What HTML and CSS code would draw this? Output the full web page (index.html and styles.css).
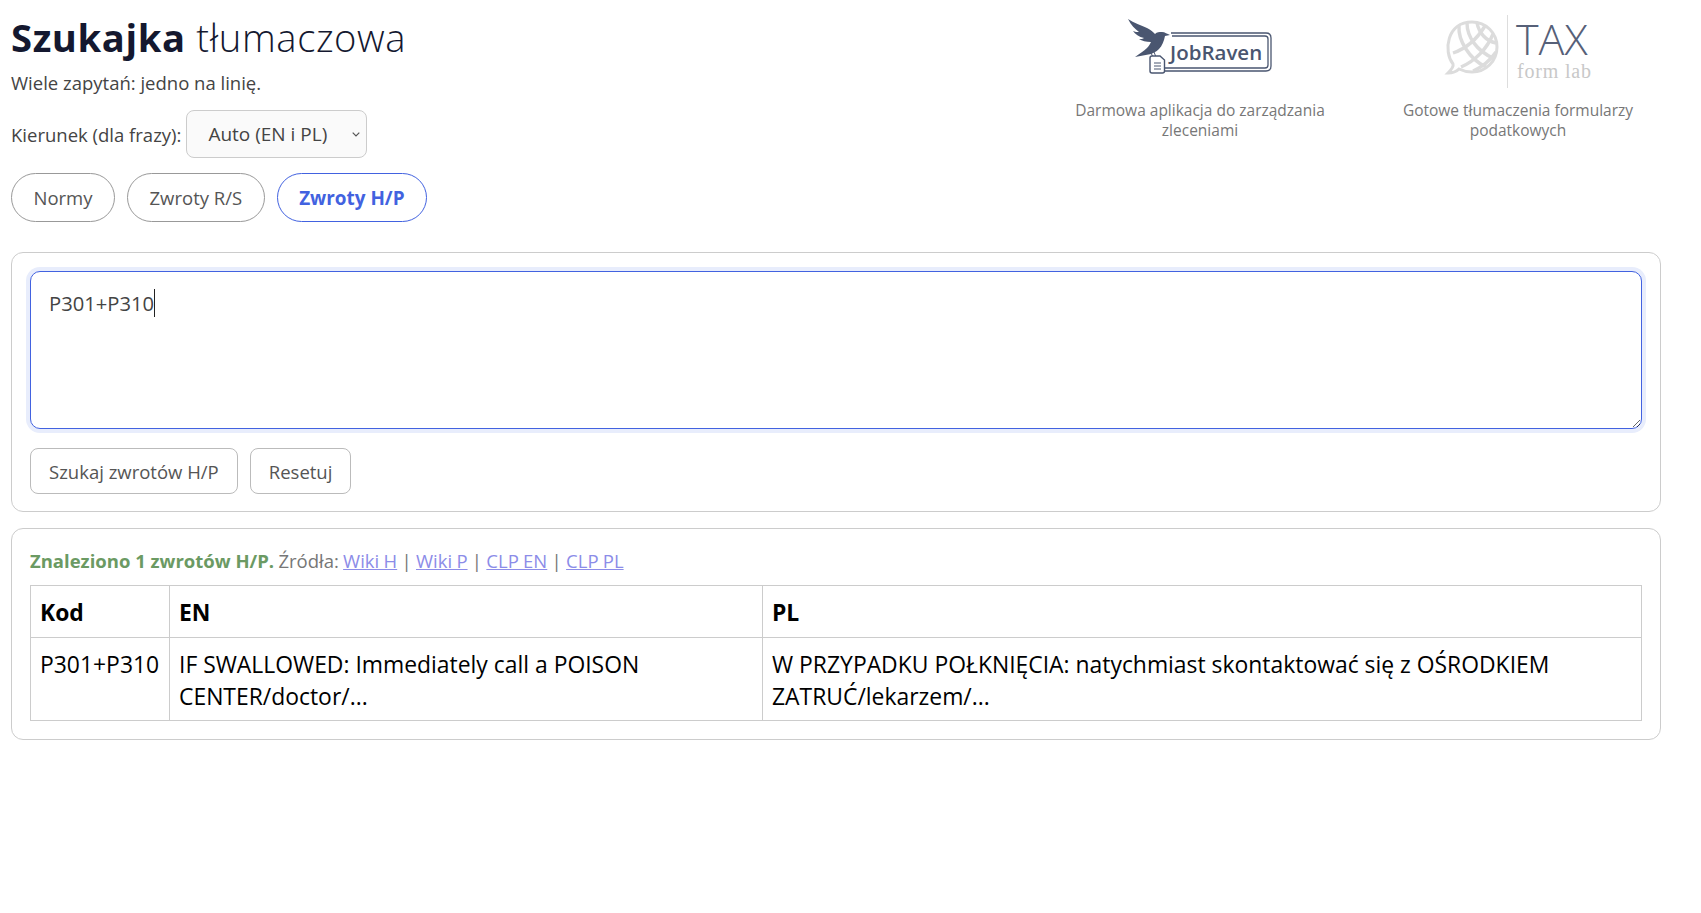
FILE: index.html
```html
<!DOCTYPE html>
<html lang="pl">
<head>
  <meta charset="UTF-8">
  <meta name="viewport" content="width=device-width, initial-scale=1.0">
  <title>Szukajka tłumaczowa</title>
  <link rel="stylesheet" href="styles.css">
</head>
<body>
  <div class="top">
    <div class="intro">
      <h1><strong>Szukajka</strong> tłumaczowa</h1>
      <p class="lead">Wiele zapytań: jedno na linię.</p>
      <div class="direction">
        <label for="dir">Kierunek (dla frazy):</label>
        <select id="dir">
          <option>Auto (EN i PL)</option>
        </select>
      </div>
      <div class="tabs">
        <button class="tab">Normy</button>
        <button class="tab">Zwroty R/S</button>
        <button class="tab active">Zwroty H/P</button>
      </div>
    </div>

    <div class="promos">
      <a class="promo">
        <svg class="logo" width="146" height="60" viewBox="0 0 146 60">
          <!-- ramka -->
          <path fill="none" stroke="#4a5670" stroke-width="1.3" d="M45 14H140Q145 14 145 19V47Q145 52 140 52H38"/>
          <path fill="none" stroke="#4a5670" stroke-width="1.3" d="M46 17H139Q142 17 142 20V46Q142 49 139 49H38"/>
          <!-- kruk -->
          <path fill="#4a5670" d="M2 0C8 4 15 6 21 9C25 11 27 13 29 15C31 13 33 13 36 13C39 13 41 15 44 16L39 17C38 22 36 27 33 30C30 33 27 34 25 35L9 38C13 35 18 32 21 29C23 27 24 25 25 23C20 23 16 22 13 20C15 20 17 20 18 19C13 18 9 15 7 12C9 13 11 13 13 13C9 10 5 6 2 0Z"/>
          <path fill="none" stroke="#4a5670" stroke-width="1" d="M28 33L30 38M25 34L27 38"/>
          <!-- dokument -->
          <path fill="#fff" stroke="#4a5670" stroke-width="1.4" d="M26 37H34L38.500 41V52Q38.500 54 36.500 54H26Q24 54 24 52V39Q24 37 26 37Z"/>
          <path fill="none" stroke="#4a5670" stroke-width="1" d="M28 44H35M28 47H35M28 50H35"/>
        </svg>
        <span class="logo-jr">JobRaven</span>
        <span class="promo-text">Darmowa aplikacja do zarządzania zleceniami</span>
      </a>
      <a class="promo">
        <svg class="logo logo-globe" width="70" height="70" viewBox="0 0 70 70">
          <!-- globus w dymku -->
          <path fill="#fff" stroke="#dcdcdc" stroke-width="3" d="M14 49C4 36 8 7 33 7C47 7 58 18 58 32C58 46 47 57 33 57C28 57 24 56 20 54C17 57 13 58 9 58C12 55 15 52 14 49Z"/>
          <g fill="none" stroke="#dcdcdc" stroke-width="3.400">
            <path d="M20 11C19 25 30 44 47 52"/>
            <path d="M28 8C28 22 38 36 54 43"/>
            <path d="M38 8C40 18 47 26 57 28"/>
            <path d="M14 38C26 34 38 24 46 11"/>
            <path d="M22 52C36 46 48 34 54 19"/>
            <path d="M34 56C44 52 52 44 57 37"/>
          </g>
        </svg>
        <span class="logo-rule"></span>
        <span class="logo-tax">TAX</span>
        <span class="logo-lab">form lab</span>
        <span class="promo-text">Gotowe tłumaczenia formularzy podatkowych</span>
      </a>
    </div>
  </div>

  <div class="card">
    <div class="query-box">
      <textarea id="query">P301+P310</textarea>
      <span class="caret"></span>
    </div>
    <div class="actions">
      <button class="btn">Szukaj zwrotów H/P</button>
      <button class="btn">Resetuj</button>
    </div>
  </div>

  <div class="card results">
    <p class="summary">
      <strong>Znaleziono 1 zwrotów H/P.</strong> Źródła:
      <a href="#">Wiki H</a> | <a href="#">Wiki P</a> | <a href="#">CLP EN</a> | <a href="#">CLP PL</a>
    </p>
    <table>
      <colgroup>
        <col class="col-code">
        <col class="col-en">
        <col>
      </colgroup>
      <thead>
        <tr><th>Kod</th><th>EN</th><th>PL</th></tr>
      </thead>
      <tbody>
        <tr>
          <td>P301+P310</td>
          <td>IF SWALLOWED: Immediately call a POISON CENTER/doctor/...</td>
          <td>W PRZYPADKU POŁKNIĘCIA: natychmiast skontaktować się z OŚRODKIEM ZATRUĆ/lekarzem/...</td>
        </tr>
      </tbody>
    </table>
  </div>
</body>
</html>
```

FILE: styles.css
```css
body {
  font-family: 'Open Sans', 'Noto Sans', sans-serif;
  font-size: 18.5px;
  color: #444;
  margin: 0;
  padding: 12px 41px 0 11px;
  background: #fff;
}

.top {
  display: flex;
  justify-content: space-between;
  align-items: flex-start;
  margin-bottom: 30px;
}

h1 {
  font-size: 38.2px;
  font-weight: 300;
  line-height: 50px;
  letter-spacing: 0.6px;
  color: #14182f;
  margin: 0;
}

h1 strong {
  font-weight: 700;
}

.lead {
  margin: 8px 0 0;
  line-height: 26px;
}

.direction {
  display: flex;
  align-items: center;
  gap: 5px;
  margin-top: 14px;
}

select {
  width: 181px;
  height: 48px;
  padding: 0 12px 0 21px;
  font: inherit;
  font-size: 19px;
  color: #444;
  appearance: none;
  background: #fafafa url("data:image/svg+xml,%3Csvg xmlns='http://www.w3.org/2000/svg' width='8' height='5'%3E%3Cpath d='M.7.7 4 4 7.300.7' fill='none' stroke='%23555' stroke-width='1.200'/%3E%3C/svg%3E") no-repeat right 6px center;
  border: 1px solid #ccc;
  border-radius: 8px;
}

.tabs {
  display: flex;
  gap: 12px;
  margin-top: 15px;
}

.tab {
  height: 49px;
  padding: 0 21.5px;
  font: inherit;
  color: #555;
  background: #fff;
  border: 1px solid #999;
  border-radius: 25px;
}

.tab.active {
  color: #4262e0;
  font-size: 18.9px;
  font-weight: 700;
  border-color: #4262e0;
}

.promos {
  display: flex;
  gap: 34px;
}

.promo {
  position: relative;
  display: block;
  width: 284px;
  text-align: center;
}

.logo {
  display: block;
  margin: 7px 0 0 68px;
}

.logo-globe {
  margin: 3px 0 -6px 63px;
}

.logo-jr {
  position: absolute;
  left: 112px;
  top: 26px;
  font-size: 20.5px;
  font-weight: 600;
  color: #4a5670;
}

.logo-rule {
  position: absolute;
  left: 131px;
  top: 3px;
  height: 73px;
  border-left: 1px solid #ddd;
}

.logo-tax {
  position: absolute;
  left: 140px;
  top: 4px;
  font-size: 43px;
  line-height: 46px;
  font-weight: 300;
  color: #566078;
}

.logo-lab {
  position: absolute;
  left: 141px;
  top: 51px;
  font-family: 'Liberation Serif', serif;
  font-size: 20px;
  line-height: 16px;
  letter-spacing: 0.8px;
  color: #c8c8c8;
}

.promo-text {
  display: block;
  margin-top: 21px;
  font-size: 15.5px;
  line-height: 20px;
  color: #777;
}

.card {
  border: 1px solid #ccc;
  border-radius: 12px;
  padding: 18px;
  margin-bottom: 16px;
  width: 1650px;
  box-sizing: border-box;
}

.query-box {
  position: relative;
}

textarea {
  display: block;
  width: 100%;
  height: 158px;
  box-sizing: border-box;
  padding: 17px 18px;
  font: inherit;
  font-size: 20.2px;
  line-height: 28px;
  color: #444;
  border: 1px solid #4262e0;
  border-radius: 10px;
  box-shadow: 0 0 0 4px #e8edfc;
  outline: none;
}

.caret {
  position: absolute;
  left: 124px;
  top: 18px;
  width: 1px;
  height: 28px;
  background: #222;
}

.actions {
  display: flex;
  gap: 12px;
  margin: 19px 0 -1px;
}

.btn {
  height: 46px;
  padding: 0 18px;
  font: inherit;
  color: #555;
  background: #fff;
  border: 1px solid #bbb;
  border-radius: 8px;
}

.summary {
  margin: 0 0 10px;
  line-height: 28px;
  word-spacing: -0.5px;
  color: #777;
}

.summary strong {
  color: #6b9a63;
  word-spacing: 0;
}

.summary a {
  color: #8c8ce8;
}

table {
  width: 100%;
  border-collapse: collapse;
  table-layout: fixed;
  color: #000;
  font-size: 22.9px;
}

.col-code {
  width: 139px;
}

.col-en {
  width: 593px;
}

th, td {
  border: 1px solid #ccc;
  padding: 11px 9px 7px;
  line-height: 32px;
  text-align: left;
  vertical-align: top;
}

th {
  padding: 10px 9px 8px;
  line-height: 33px;
}
```
